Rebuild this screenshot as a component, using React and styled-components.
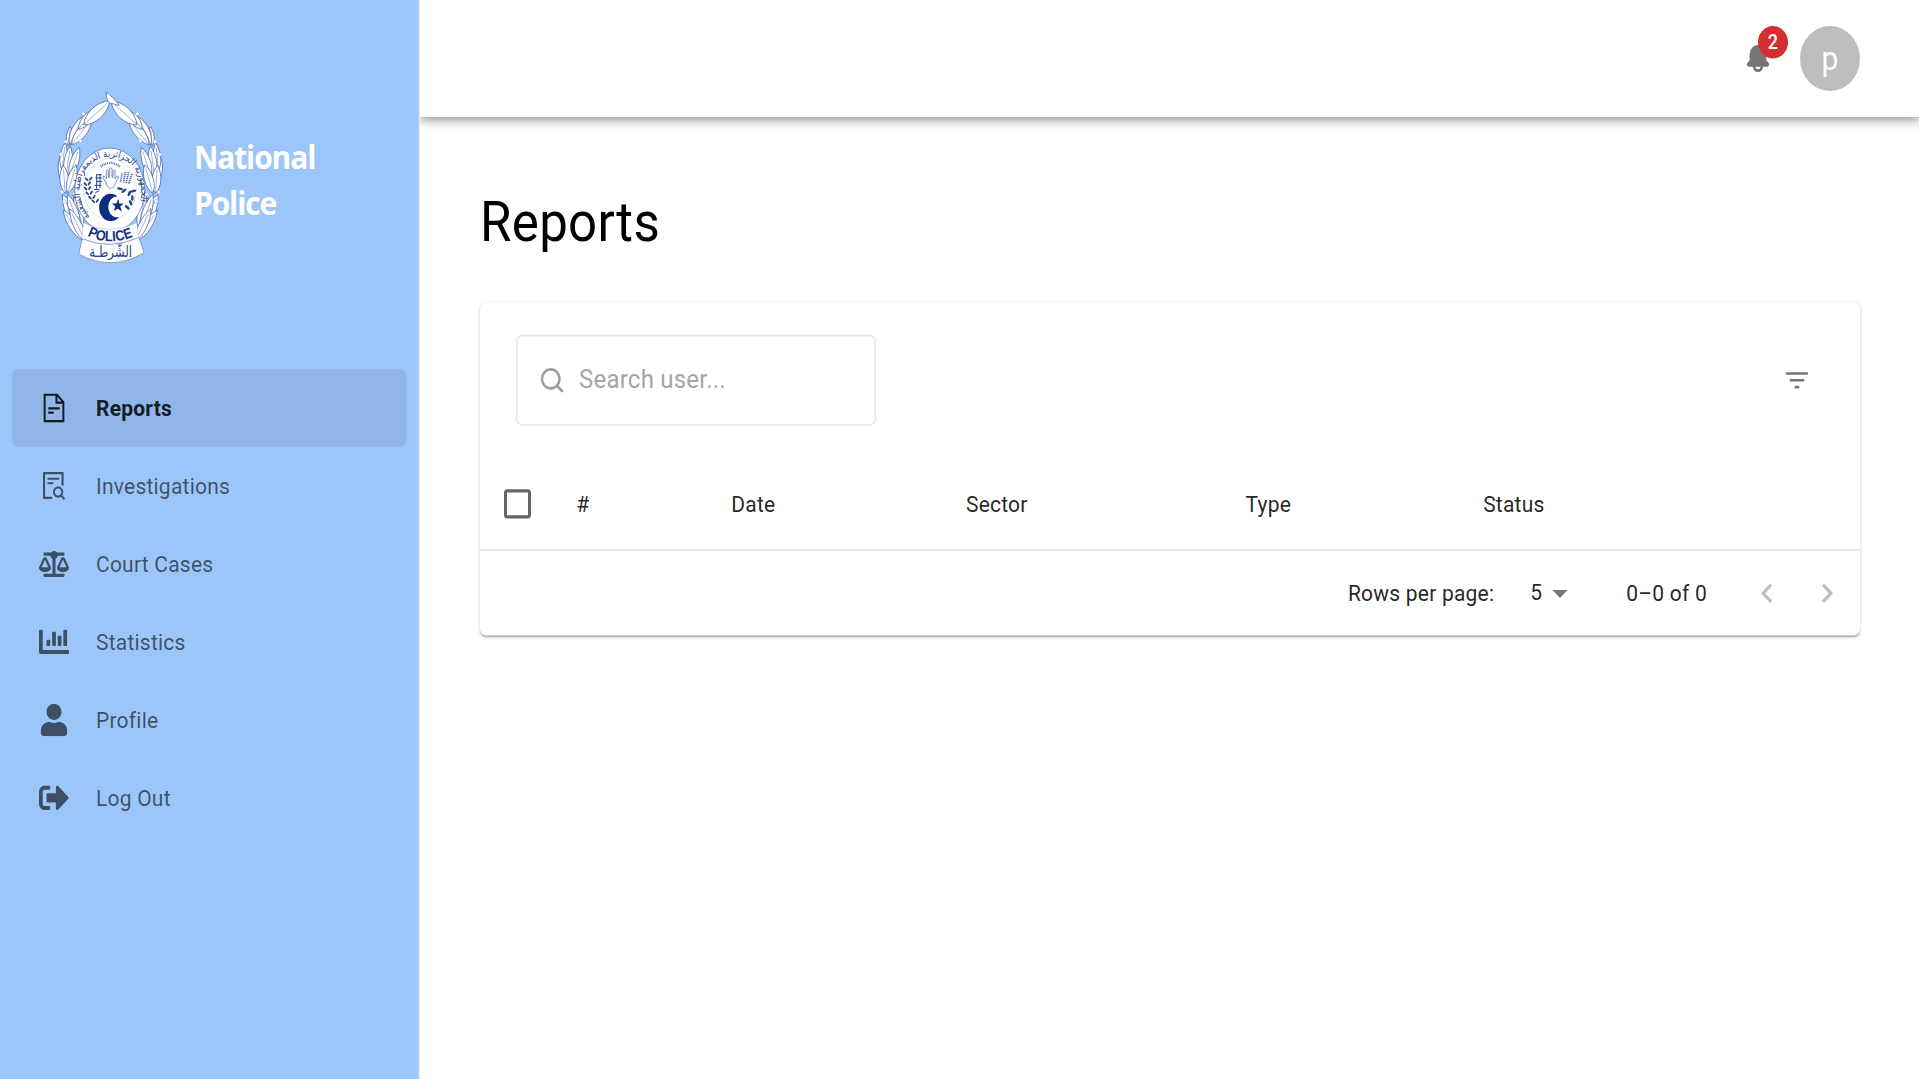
import React from 'react';
import styled, { createGlobalStyle } from 'styled-components';
import { FaBalanceScale, FaChartBar, FaUser, FaSignOutAlt } from 'react-icons/fa';
import { AiOutlineFileSearch } from 'react-icons/ai';
import {
  MdCheckBoxOutlineBlank,
  MdKeyboardArrowLeft,
  MdKeyboardArrowRight,
  MdArrowDropDown,
} from 'react-icons/md';

const GlobalStyle = createGlobalStyle`
  *, *::before, *::after { box-sizing: border-box; }
  html, body { margin: 0; height: 100%; overflow: hidden; background: #fff; }
  body { font-family: Roboto, "Noto Sans", sans-serif; color: rgba(0, 0, 0, 0.87); }
`;

const Shell = styled.div`
  display: flex;
  width: 1280px;
  height: 664px;
  transform: scale(1.5, 1.625);
  transform-origin: 0 0;
  background: #fff;
`;

const Sidebar = styled.aside`
  position: relative;
  z-index: 1;
  flex: none;
  width: 280px;
  background: #9cc6fa;
  border-right: 0.67px solid #dfe3e8;
`;

const Brand = styled.div`
  display: flex;
  align-items: center;
  height: 227px;
  padding: 0 0 9.4px 36px;
`;

const BrandName = styled.div`
  width: 90px;
  margin: 4.4px 0 0 19.3px;
  color: #fff;
  font: 700 20px/28.4px "Open Sans", "Noto Sans", sans-serif;
  letter-spacing: -0.75px;
`;

const Nav = styled.nav`
  padding: 0 7.6px 0 8px;
`;

const NavItem = styled.a`
  display: flex;
  align-items: center;
  height: 48px;
  border-radius: 4px;
  font-size: 14px;
  line-height: 22px;
  letter-spacing: 0.15px;
  color: ${(p) => (p.$active ? 'rgba(0,0,0,0.87)' : 'rgba(0,0,0,0.6)')};
  font-weight: ${(p) => (p.$active ? 700 : 400)};
  background: ${(p) => (p.$active ? 'rgba(0,0,0,0.08)' : 'transparent')};
`;

const NavIcon = styled.span`
  display: flex;
  justify-content: center;
  width: 56px;
  svg { width: 20px; height: 20px; }
`;

const Page = styled.div`
  flex: 1;
  min-width: 0;
`;

const TopBar = styled.header`
  display: flex;
  justify-content: flex-end;
  align-items: center;
  gap: 18px;
  height: 72px;
  padding-right: 40px;
  box-shadow: 0 2px 4px -1px rgba(0, 0, 0, 0.2), 0 4px 5px 0 rgba(0, 0, 0, 0.14),
    0 1px 10px 0 rgba(0, 0, 0, 0.12);
`;

const BellButton = styled.span`
  position: relative;
  display: flex;
  color: #757575;
`;

const Badge = styled.span`
  position: absolute;
  top: -10px;
  right: -10px;
  width: 20px;
  height: 20px;
  border-radius: 10px;
  background: #d32f2f;
  color: #fff;
  font-size: 12px;
  font-weight: 500;
  line-height: 20px;
  text-align: center;
`;

const Avatar = styled.span`
  display: flex;
  align-items: center;
  justify-content: center;
  width: 40px;
  height: 40px;
  border-radius: 50%;
  background: #bdbdbd;
  color: #fff;
  font-size: 20px;
  line-height: 20px;
`;

const Main = styled.main`
  padding: 42.7px 40px 0;
`;

const Title = styled.h4`
  margin: 0 0 29px;
  color: #000;
  font-size: 34px;
  font-weight: 400;
  line-height: 42px;
  letter-spacing: 0.22px;
`;

const Card = styled.section`
  border-radius: 4px;
  background: #fff;
  box-shadow: 0 2px 1px -1px rgba(0, 0, 0, 0.2), 0 1px 1px 0 rgba(0, 0, 0, 0.14),
    0 1px 3px 0 rgba(0, 0, 0, 0.12);
`;

const Toolbar = styled.div`
  display: flex;
  align-items: center;
  justify-content: space-between;
  height: 96px;
  padding: 0 24px;
`;

const SearchBox = styled.div`
  display: flex;
  align-items: center;
  gap: 8px;
  width: 240px;
  height: 56px;
  padding: 0 13px;
  border: 1px solid #e6e6e6;
  border-radius: 4px;
  color: #a5a5a5;
  font-size: 16px;
  line-height: 20px;
  letter-spacing: 0.15px;
  svg { color: #9e9e9e; }
`;

const FilterButton = styled.span`
  display: flex;
  padding: 8px;
  color: #757575;
`;

const HeadRow = styled.div`
  display: grid;
  grid-template-columns: 64.2px 103.4px 156.4px 186.4px 158.4px 1fr;
  align-items: center;
  height: 57.6px;
  border-bottom: 1px solid #e6e6e6;
  font-size: 14px;
  font-weight: 400;
  letter-spacing: 0.15px;
`;

const CheckCell = styled.span`
  display: flex;
  padding-left: 13.3px;
  color: #666;
`;

const Footer = styled.div`
  display: flex;
  align-items: center;
  justify-content: flex-end;
  height: 52px;
  padding-right: 2px;
  font-size: 14px;
  letter-spacing: 0.15px;
`;

const PageSize = styled.span`
  display: flex;
  align-items: center;
  justify-content: flex-end;
  width: 48px;
  margin: 0 32px 0 8px;
  padding-bottom: 1.8px;
  svg { color: #757575; margin-top: 2px; }
`;

const Range = styled.span`
  margin-right: 20px;
`;

const PagerButton = styled.span`
  display: flex;
  padding: 8px;
  color: #bdbdbd;
`;

const DocumentIcon = () => (
  <svg viewBox="0 0 20 20" fill="none" stroke="currentColor" strokeWidth="1.3">
    <path d="M3.75 1.95h8.3l4.2 4.5v11.7H3.75zM11.6 2v4.8h4.6M6.2 10.3h7.6M6.2 12.9h3.6" />
  </svg>
);

const BellIcon = () => (
  <svg width="20" height="20" viewBox="0 0 24 24" fill="currentColor">
    <path d="m20.52 15.21l-1.8-1.81V8.94a6.86 6.86 0 0 0-5.82-6.88a6.74 6.74 0 0 0-7.62 6.67v4.67l-1.8 1.81A1.64 1.64 0 0 0 4.64 18H8v.34A3.84 3.84 0 0 0 12 22a3.84 3.84 0 0 0 4-3.66V18h3.36a1.64 1.64 0 0 0 1.16-2.79M14 18.34A1.88 1.88 0 0 1 12 20a1.88 1.88 0 0 1-2-1.66V18h4Z" />
  </svg>
);

const SearchIcon = () => (
  <svg width="20" height="20" viewBox="0 0 24 24" fill="currentColor">
    <path d="m20.71 19.29l-3.4-3.39A7.92 7.92 0 0 0 19 11a8 8 0 1 0-8 8a7.92 7.92 0 0 0 4.9-1.69l3.39 3.4a1 1 0 0 0 1.42 0a1 1 0 0 0 0-1.42M5 11a6 6 0 1 1 6 6a6 6 0 0 1-6-6" />
  </svg>
);

const FilterIcon = () => (
  <svg width="20" height="20" viewBox="0 0 24 24" fill="currentColor">
    <path d="M11 18h2c.55 0 1-.45 1-1s-.45-1-1-1h-2c-.55 0-1 .45-1 1s.45 1 1 1M3 7c0 .55.45 1 1 1h16c.55 0 1-.45 1-1s-.45-1-1-1H4c-.55 0-1 .45-1 1m4 6h10c.55 0 1-.45 1-1s-.45-1-1-1H7c-.55 0-1 .45-1 1s.45 1 1 1" />
  </svg>
);

const EmblemSvg = styled.svg`
  flex: none;
  width: 74px;
  height: 108px;
`;

// tip x, tip y, base x, base y, width of every leaf on the left half of the wreath
const leaves = [
  [56, 228, 62, 310, 22], [70, 190, 60, 272, 22], [86, 142, 80, 200, 18], [125, 112, 84, 196, 30],
  [86, 200, 72, 296, 26], [114, 204, 84, 290, 26], [64, 258, 70, 342, 28], [104, 256, 78, 342, 28],
  [154, 120, 90, 196, 30], [158, 92, 112, 150, 26], [210, 64, 128, 136, 38],
  [62, 345, 105, 440, 28], [100, 345, 124, 445, 26], [78, 345, 115, 450, 28],
  [64, 392, 128, 484, 28], [84, 388, 134, 488, 26],
];
const berries = [[72, 187], [127, 103], [57, 225], [67, 366], [60, 338], [118, 185], [98, 345]];

const leafPath = ([x1, y1, x2, y2, w]) => {
  const dx = x2 - x1;
  const dy = y2 - y1;
  const len = Math.hypot(dx, dy);
  const nx = (-dy / len) * w * 0.66;
  const ny = (dx / len) * w * 0.66;
  const at = (t, s) => `${x1 + dx * t + nx * s} ${y1 + dy * t + ny * s}`;
  return {
    outline: `M${x1} ${y1}C${at(0.3, 1)} ${at(0.75, 1)} ${x2} ${y2}C${at(0.75, -1)} ${at(0.3, -1)} ${x1} ${y1}Z`,
    vein: `M${at(0.15, 0)}L${x2} ${y2}`,
  };
};

const WreathHalf = () => (
  <g>
    {leaves.map((leaf, i) => {
      const { outline, vein } = leafPath(leaf);
      return (
        <g key={i}>
          <path d={outline} fill="#fff" stroke="#3657a0" strokeWidth="2.2" />
          <path d={vein} fill="none" stroke="#5f7cbb" strokeWidth="1.8" />
        </g>
      );
    })}
    {berries.map(([x, y], i) => (
      <circle key={i} cx={x} cy={y} r="5.5" fill="#fff" stroke="#6f8fce" strokeWidth="1.2" />
    ))}
  </g>
);

const wheat = [[140, 300], [136, 314], [137, 328], [142, 342], [150, 355], [160, 366]];
const laurel = [[262, 384], [272, 370], [277, 356], [268, 342], [252, 334], [280, 335], [240, 328]];

const Emblem = () => (
  <EmblemSvg viewBox="42 30 333 526.5" preserveAspectRatio="none">
    <defs>
      <path id="sealArc" d="M150 412C98 360 108 236 210 232C310 236 324 350 280 414" />
      <path id="policeArc" d="M142 469Q208 502 284 470" />
    </defs>
    <g transform="translate(8.4 0) scale(.96 1)"><WreathHalf /></g>
    <g transform="translate(413.6 0) scale(-.96 1)"><WreathHalf /></g>
    <path d="M198 38Q222 54 238 78L206 70Q199 58 198 38Z" fill="#fff" stroke="#3657a0" strokeWidth="2" />
    <ellipse cx="209" cy="332" rx="105" ry="126" fill="#fff" stroke="#3c5ca6" strokeWidth="2" />
    <ellipse cx="210" cy="330" rx="79" ry="92" fill="none" stroke="#a9b9dd" strokeWidth="1.2" />
    <text fill="#25458f" fontFamily="DejaVu Sans, sans-serif" fontSize="29">
      <textPath href="#sealArc" textLength="425" lengthAdjust="spacingAndGlyphs">
        الجمهورية الجزائرية الديمقراطية الشعبية
      </textPath>
    </text>
    <path d="M182 262Q212 238 242 264" fill="none" stroke="#3657a0" strokeWidth="7" strokeDasharray="2.5 3" />
    <path
      d="M203 322Q198 308 190 296Q187 289 192 290L199 298V274Q202 268 205 274V294L208 294V268Q212 262 216 268V294L219 294V274Q222 268 225 274V298L232 290Q238 289 234 297Q227 308 222 322Q212 332 203 322Z"
      fill="#fff" stroke="#4a6ab0" strokeWidth="2.2"
    />
    {wheat.map(([x, y], i) => (
      <g key={i} fill="#25458f">
        <ellipse cx={x} cy={y} rx="3" ry="7" transform={`rotate(-45 ${x} ${y})`} />
        <ellipse cx={x + 12} cy={y - 2} rx="3" ry="7" transform={`rotate(35 ${x + 12} ${y - 2})`} />
      </g>
    ))}
    <path d="M168 286h18M166 296h20M168 306h18M164 318h20M162 330h16M170 284v44M180 284v42M166 340l12 -6" stroke="#25458f" strokeWidth="3" />
    <path d="M246 282l-4 26M256 278l-6 32M266 278l-8 34M276 284l-10 30" stroke="#4a6ab0" strokeWidth="5" strokeDasharray="4 2" />
    {laurel.map(([x, y], i) => (
      <g key={i} fill="#25458f">
        <ellipse cx={x} cy={y} rx="4" ry="9" transform={`rotate(${i * 25 - 50} ${x} ${y})`} />
      </g>
    ))}
    <path d="M234 352A35 41 0 1 0 238 412A25 31 0 1 1 234 352Z" fill="#0c2f84" />
    <path d="M235 358L238 372L251 372L241 381L246 397L234 388L221 395L226 381L216 372L229 372Z" fill="#0c2f84" />
    <path d="M130 430Q208 470 290 430L297 474Q212 516 126 478Z" fill="#fff" stroke="#8fa5d4" strokeWidth="1.2" />
    <text fill="#12337f" fontFamily="Liberation Sans, sans-serif" fontSize="44" fontWeight="700">
      <textPath href="#policeArc" textLength="142" lengthAdjust="spacingAndGlyphs">POLICE</textPath>
    </text>
    <path d="M127 478Q210 514 297 474L312 520Q215 578 116 524Z" fill="#fff" stroke="#5d7dbd" strokeWidth="2" />
    <text
      x="212" y="532" textAnchor="middle" textLength="128" lengthAdjust="spacingAndGlyphs"
      fill="#25458f" fontFamily="DejaVu Sans, sans-serif" fontSize="46"
    >
      الشّرطـة
    </text>
  </EmblemSvg>
);

const items = [
  { label: 'Reports', icon: <DocumentIcon />, active: true },
  { label: 'Investigations', icon: <AiOutlineFileSearch /> },
  { label: 'Court Cases', icon: <FaBalanceScale /> },
  { label: 'Statistics', icon: <FaChartBar /> },
  { label: 'Profile', icon: <FaUser /> },
  { label: 'Log Out', icon: <FaSignOutAlt /> },
];

export default function App() {
  return (
    <>
      <GlobalStyle />
      <Shell>
        <Sidebar>
          <Brand>
            <Emblem />
            <BrandName>National Police</BrandName>
          </Brand>
          <Nav>
            {items.map((it) => (
              <NavItem key={it.label} $active={it.active}>
                <NavIcon>{it.icon}</NavIcon>
                {it.label}
              </NavItem>
            ))}
          </Nav>
        </Sidebar>
        <Page>
          <TopBar>
            <BellButton>
              <BellIcon />
              <Badge>2</Badge>
            </BellButton>
            <Avatar>p</Avatar>
          </TopBar>
          <Main>
            <Title>Reports</Title>
            <Card>
              <Toolbar>
                <SearchBox>
                  <SearchIcon />
                  Search user...
                </SearchBox>
                <FilterButton><FilterIcon /></FilterButton>
              </Toolbar>
              <HeadRow>
                <CheckCell><MdCheckBoxOutlineBlank size={24} /></CheckCell>
                {['#', 'Date', 'Sector', 'Type', 'Status'].map((h) => <span key={h}>{h}</span>)}
              </HeadRow>
              <Footer>
                <span>Rows per page:</span>
                <PageSize>5<MdArrowDropDown size={24} /></PageSize>
                <Range>0–0 of 0</Range>
                <PagerButton><MdKeyboardArrowLeft size={24} /></PagerButton>
                <PagerButton><MdKeyboardArrowRight size={24} /></PagerButton>
              </Footer>
            </Card>
          </Main>
        </Page>
      </Shell>
    </>
  );
}
